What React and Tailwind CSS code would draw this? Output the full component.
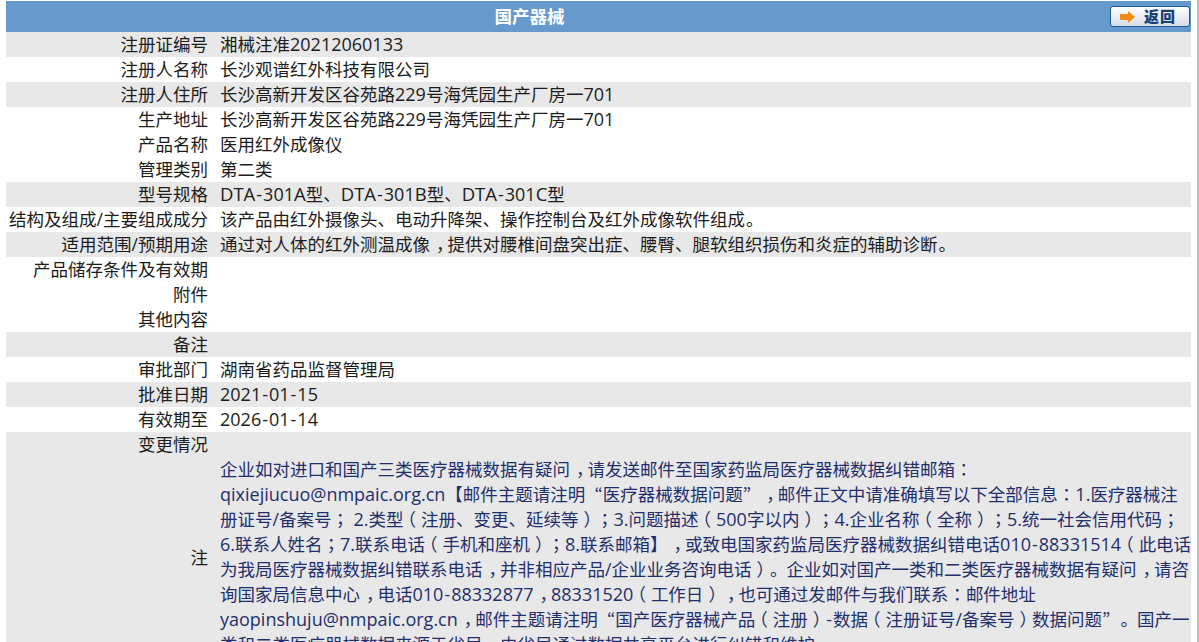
const font = { fontFamily: '"Open Sans", "Noto Sans CJK SC", sans-serif' };

const rows = [
  ['注册证编号', '湘械注准20212060133', true],
  ['注册人名称', '长沙观谱红外科技有限公司', false],
  ['注册人住所', '长沙高新开发区谷苑路229号海凭园生产厂房一701', true],
  ['生产地址', '长沙高新开发区谷苑路229号海凭园生产厂房一701', false],
  ['产品名称', '医用红外成像仪', false],
  ['管理类别', '第二类', false],
  ['型号规格', 'DTA-301A型、DTA-301B型、DTA-301C型', true],
  ['结构及组成/主要组成成分', '该产品由红外摄像头、电动升降架、操作控制台及红外成像软件组成。', false],
  ['适用范围/预期用途', '通过对人体的红外测温成像，提供对腰椎间盘突出症、腰臀、腿软组织损伤和炎症的辅助诊断。', true],
  ['产品储存条件及有效期', '', false],
  ['附件', '', false],
  ['其他内容', '', false],
  ['备注', '', true],
  ['审批部门', '湖南省药品监督管理局', false],
  ['批准日期', '2021-01-15', true],
  ['有效期至', '2026-01-14', false],
  ['变更情况', '', true],
];

const note = [
  '企业如对进口和国产三类医疗器械数据有疑问，请发送邮件至国家药监局医疗器械数据纠错邮箱：',
  'qixiejiucuo@nmpaic.org.cn【邮件主题请注明“医疗器械数据问题”，邮件正文中请准确填写以下全部信息：1.医疗器械注',
  '册证号/备案号； 2.类型（注册、变更、延续等）；3.问题描述（500字以内）；4.企业名称（全称）；5.统一社会信用代码；',
  '6.联系人姓名；7.联系电话（手机和座机）；8.联系邮箱】，或致电国家药监局医疗器械数据纠错电话010-88331514（此电话',
  '为我局医疗器械数据纠错联系电话，并非相应产品/企业业务咨询电话）。企业如对国产一类和二类医疗器械数据有疑问，请咨',
  '询国家局信息中心，电话010-88332877，88331520（工作日），也可通过发邮件与我们联系：邮件地址',
  'yaopinshuju@nmpaic.org.cn，邮件主题请注明“国产医疗器械产品（注册）-数据（注册证号/备案号）数据问题”。国产一',
  '类和二类医疗器械数据来源于省局，由省局通过数据共享平台进行纠错和维护。',
];

// each punctuation mark gets nudged inside its em box, the reference font centres them
const punct = {
  '，': 'ml-[6px] mr-[-6px]',
  '。': 'ml-px mr-[-1px]',
  '（': 'ml-[-5px] mr-[5px]',
  '）': 'ml-[5px] mr-[-5px]',
  '；': "inline-block w-[1em] text-center font-['Noto_Sans_CJK_KR']",
  '：': "inline-block w-[1em] text-center font-['Noto_Sans_CJK_KR']",
  '“': "inline-block w-[1em] text-right font-['Noto_Sans_CJK_KR']",
  '”': "inline-block w-[1em] text-left font-['Noto_Sans_CJK_KR']",
};

function Txt({ text }) {
  const parts = text.match(/[，。（）；：“”]|-|[A-Z]+|[a-z0-9@.]+|[^，。（）；：“”A-Za-z0-9@.\-]+/g) || [];
  return parts.map((p, i) => {
    if (punct[p]) return <span key={i} className={`leading-none ${punct[p]}`}>{p}</span>;
    if (p === '-') return <span key={i} className="leading-none text-[18px] mx-px">{p}</span>;
    if (/^[A-Z]/.test(p)) return <span key={i} className="leading-none text-[18.5px]">{p}</span>;
    if (/^[a-z0-9@.]/.test(p)) return <span key={i} className="leading-none text-[18px]">{p}</span>;
    return <span key={i} className="leading-none">{p}</span>;
  });
}

function Row({ label, value, shaded }) {
  return (
    <div className={`flex h-[25px] leading-[25px] ${shaded ? 'bg-[#e8e8e8]' : 'bg-white'}`}>
      <div className="w-[202px] shrink-0 text-right whitespace-nowrap">{label}</div>
      <div className="pl-3 whitespace-nowrap"><Txt text={value} /></div>
    </div>
  );
}

export default function App() {
  return (
    <div className="h-[642px] overflow-hidden flex bg-white text-[17.5px] text-[#1c1c1c] [text-spacing-trim:space-all]" style={font}>
      <div className="w-[1185px] ml-[6px] pt-px shrink-0">
        <div className="flex h-[31px] bg-[#6699cc]">
          <div className="flex-1 text-center text-white font-bold leading-[31px]">国产器械</div>
          <div className="w-[138px] flex items-center justify-end pr-px">
            <button className="w-[80px] h-[21px] flex items-center justify-center gap-[8px] pr-1 rounded-[3px] border border-[#1f5a96] bg-gradient-to-b from-white to-[#d5dde6]">
              <svg width="16" height="12" viewBox="0 0 16 12">
                <path d="M0 3h8V0l7 6-7 6V9H0z" fill="#f08c12" />
              </svg>
              <span className="text-[15px] font-black text-[#16407a] leading-none tracking-[1px]">返回</span>
            </button>
          </div>
        </div>
        {rows.map(([label, value, shaded]) => (
          <Row key={label} label={label} value={value} shaded={shaded} />
        ))}
        <div className="flex items-center h-[200px] bg-[#e8e8e8]">
          <div className="w-[202px] shrink-0 text-right">注</div>
          <div className="pl-3 leading-[25px] text-[#1f2f6e] whitespace-nowrap">
            {note.map((line) => (
              <div key={line}><Txt text={line} /></div>
            ))}
          </div>
        </div>
      </div>
      <div className="ml-[6px] w-[2px] bg-[#c0c0c0]" />
    </div>
  );
}
